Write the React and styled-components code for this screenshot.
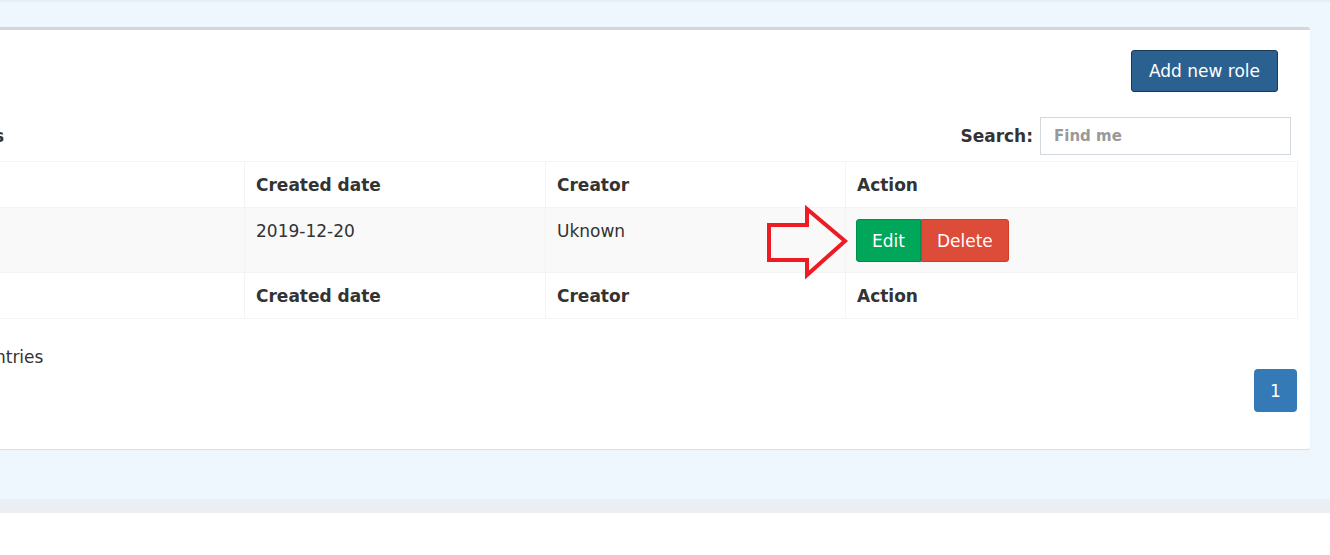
import React from 'react'
import styled, { createGlobalStyle } from 'styled-components'

const GlobalStyle = createGlobalStyle`
  html, body {
    margin: 0;
    padding: 0;
    background: #fff;
    color: #333;
    font-family: "DejaVu Sans", Verdana, sans-serif;
    font-size: 17px;
  }
`

const Page = styled.div`
  position: relative;
  overflow: hidden;
`

const TopStrip = styled.div`
  height: 2px;
  background: #e9edf1;
`

const Content = styled.div`
  background: #eef7fe;
  margin-left: -199px;
  padding: 25px 20px 50px 0;
`

const BottomStrip = styled.div`
  height: 14px;
  background: #ebeef2;
`

const Box = styled.div`
  background: #fff;
  border-top: 3px solid #d2d6de;
  border-radius: 3px;
  box-shadow: 0 1px 1px rgba(0, 0, 0, 0.1);
`

const BoxHeader = styled.div`
  display: flex;
  justify-content: flex-end;
  padding: 20px 32px 0;
`

const BoxBody = styled.div`
  padding: 25px 13px 37px;
`

const Button = styled.button`
  box-sizing: border-box;
  height: ${p => p.$h || 42}px;
  padding: 0 ${p => p.$px || 15}px;
  font-family: inherit;
  font-size: 17px;
  color: #fff;
  background: ${p => p.$bg};
  border: 1px solid ${p => p.$border};
  border-radius: 3px;
  cursor: pointer;
`

const BtnGroup = styled.div`
  display: inline-flex;
  margin-left: -1px;
  & > button:first-child { border-top-right-radius: 0; border-bottom-right-radius: 0; }
  & > button:last-child { border-top-left-radius: 0; border-bottom-left-radius: 0; }
`

const Controls = styled.div`
  display: flex;
  justify-content: space-between;
  align-items: center;
  height: 38px;
`

const Label = styled.label`
  display: flex;
  align-items: center;
  font-weight: bold;
  white-space: pre;
`

const LengthSelect = styled.select`
  width: 55px;
  height: 32px;
  margin: 0 2px;
  font-family: inherit;
  font-size: 15px;
  border: 1px solid #d2d6de;
  background: #fff;
`

const SearchLabel = styled(Label)`
  gap: 7px;
  margin-right: 6px;
`

const SearchInput = styled.input`
  box-sizing: border-box;
  width: 251px;
  height: 38px;
  padding: 0 13px;
  border: 1px solid #d2d6de;
  font-family: inherit;
  font-size: 15px;
  font-weight: bold;
  color: #555;
  outline: none;
  &::placeholder { color: #999; }
`

const Table = styled.table`
  width: 100%;
  margin-top: 6px;
  border-collapse: collapse;
  table-layout: fixed;
  border: 1px solid #f4f4f4;
`

const Cell = styled.td`
  padding: 11px 11px 10px;
  line-height: 24px;
  border: 1px solid #f4f4f4;
  text-align: left;
  vertical-align: top;
  font-weight: ${p => (p.as === 'th' ? 'bold' : 'normal')};
`

const Row = styled.tr`
  background: ${p => (p.$striped ? '#f9f9f9' : '#fff')};
`

const Footer = styled.div`
  display: flex;
  flex-direction: column;
  margin-top: 26px;
`

const Info = styled.div`
  line-height: 24px;
`

const Pager = styled.div`
  display: flex;
  justify-content: flex-end;
`

const PageBtn = styled.span`
  width: 43px;
  height: 43px;
  display: flex;
  align-items: center;
  justify-content: center;
  background: #337ab7;
  color: #fff;
  border-radius: 4px;
`

const Arrow = styled.svg`
  position: absolute;
  left: 760px;
  top: 200px;
`

const columns = ['#', 'Role name', 'Created date', 'Creator', 'Action']
const widths = [60, 370, 301, 300, 452]

const rows = [
  { id: 1, name: 'Admin', created: '2019-12-20', creator: 'Uknown' }
]

function HeadRow () {
  return (
    <Row>
      {columns.map(c => <Cell as='th' key={c}>{c}</Cell>)}
    </Row>
  )
}

export default function App () {
  return (
    <Page>
      <GlobalStyle />
      <TopStrip />
      <Content>
        <Box>
          <BoxHeader>
            <Button $bg='#2b6190' $border='#173a57' $px={17}>Add new role</Button>
          </BoxHeader>
          <BoxBody>
            <Controls>
              <Label>
                Show <LengthSelect defaultValue='10'><option>10</option><option>25</option></LengthSelect> entries
              </Label>
              <SearchLabel>
                Search:
                <SearchInput placeholder='Find me' />
              </SearchLabel>
            </Controls>
            <Table>
              <colgroup>
                {widths.map((w, i) => <col key={i} style={{ width: w }} />)}
              </colgroup>
              <thead>
                <HeadRow />
              </thead>
              <tbody>
                {rows.map(r => (
                  <Row $striped key={r.id}>
                    <Cell>{r.id}</Cell>
                    <Cell>{r.name}</Cell>
                    <Cell>{r.created}</Cell>
                    <Cell>{r.creator}</Cell>
                    <Cell>
                      <BtnGroup>
                        <Button $h={43} $bg='#00a65a' $border='#008d4c'>Edit</Button>
                        <Button $h={43} $bg='#dd4b39' $border='#d73925'>Delete</Button>
                      </BtnGroup>
                    </Cell>
                  </Row>
                ))}
              </tbody>
              <tfoot>
                <HeadRow />
              </tfoot>
            </Table>
            <Footer>
              <Info>Showing 1 to 1 of 1 entries</Info>
              <Pager>
                <PageBtn>1</PageBtn>
              </Pager>
            </Footer>
          </BoxBody>
        </Box>
      </Content>
      <BottomStrip />
      <Arrow width='100' height='90' viewBox='760 200 100 90'>
        <polygon
          points='769,225 807,225 807,209 845,241 807,275 807,260 769,260'
          fill='none'
          stroke='#ed1c24'
          strokeWidth='4'
          strokeLinejoin='miter'
        />
      </Arrow>
    </Page>
  )
}
